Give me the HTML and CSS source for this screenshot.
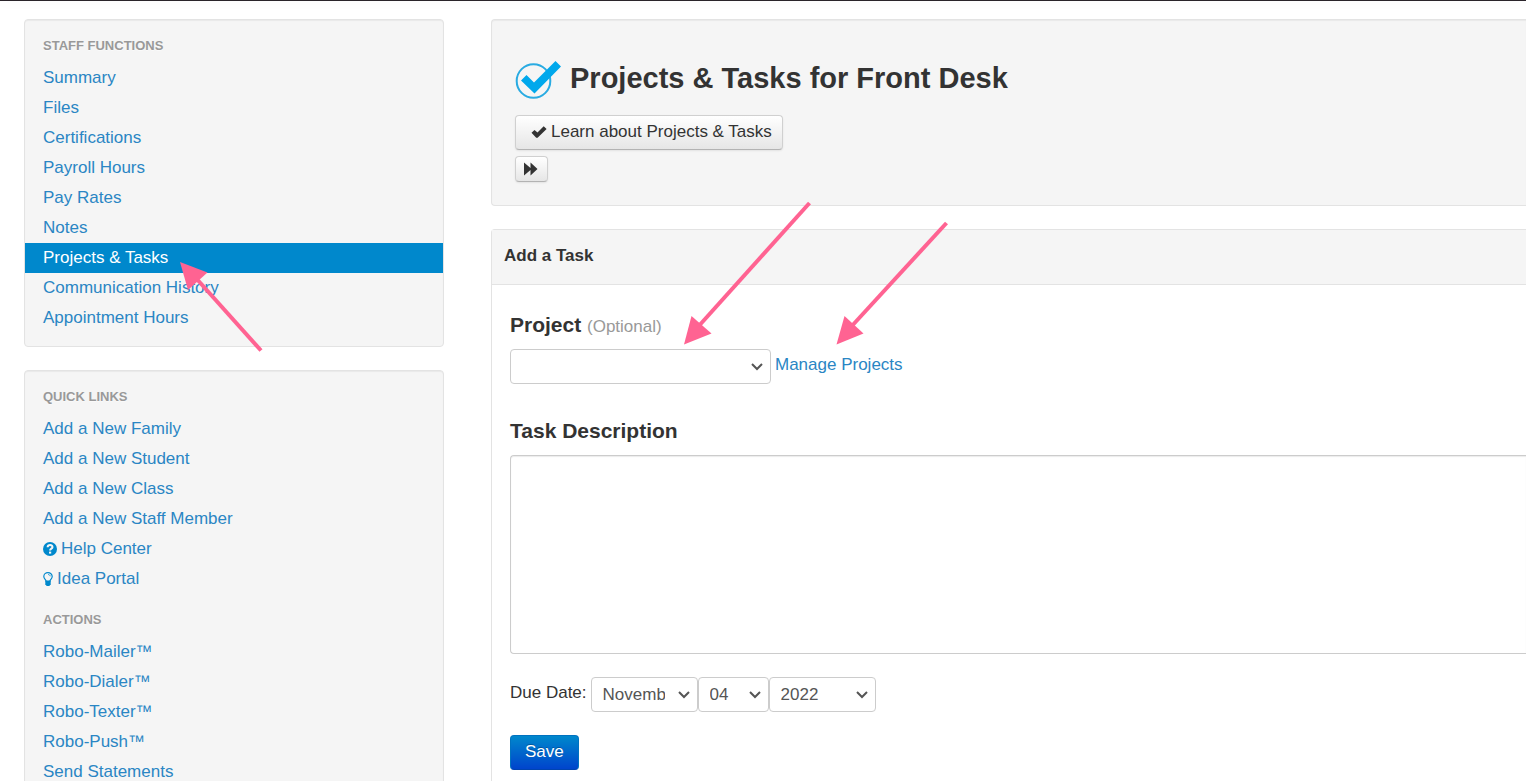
FILE: index.html
```html
<!DOCTYPE html>
<html lang="en">
<head>
<meta charset="utf-8">
<title>Projects &amp; Tasks for Front Desk</title>
<link rel="stylesheet" href="styles.css">
</head>
<body>
<div class="topbar"></div>
<div class="layout">
  <aside class="sidebar">
    <nav class="well side-panel" aria-label="Staff functions">
      <h2 class="nav-header">Staff Functions</h2>
      <ul class="nav-list">
        <li><a href="#">Summary</a></li>
        <li><a href="#">Files</a></li>
        <li><a href="#">Certifications</a></li>
        <li><a href="#">Payroll Hours</a></li>
        <li><a href="#">Pay Rates</a></li>
        <li><a href="#">Notes</a></li>
        <li><a class="active" href="#">Projects &amp; Tasks</a></li>
        <li><a href="#">Communication History</a></li>
        <li><a href="#">Appointment Hours</a></li>
      </ul>
    </nav>
    <nav class="well side-panel side-panel-last" aria-label="Quick links">
      <h2 class="nav-header">Quick Links</h2>
      <ul class="nav-list">
        <li><a href="#">Add a New Family</a></li>
        <li><a href="#">Add a New Student</a></li>
        <li><a href="#">Add a New Class</a></li>
        <li><a href="#">Add a New Staff Member</a></li>
        <li><a class="with-icon" href="#"><svg width="14" height="14" viewBox="0 0 14 14" aria-hidden="true"><circle cx="7" cy="7" r="7" fill="#08c"/><path d="M4.600 5.200C4.800 2.400 9.600 2.400 9.500 5.100C9.400 6.700 7.100 6.600 7.100 8.600" fill="none" stroke="#f5f5f5" stroke-width="2"/><rect x="6" y="9.600" width="2.200" height="2" fill="#f5f5f5"/></svg>Help Center</a></li>
        <li><a class="with-icon" href="#"><svg width="10" height="14" viewBox="0 0 10 14" aria-hidden="true"><path d="M3.200 9.500C3.200 7.600 .8 7 .8 4.500C.8 2.300 2.700 .7 5 .7S9.200 2.300 9.200 4.500C9.200 7 6.800 7.600 6.800 9.500Z" fill="none" stroke="#08c" stroke-width="1.200"/><path d="M5 2.500C6.300 2.500 7.200 3.300 7.300 4.300" fill="none" stroke="#08c" stroke-width=".8"/><path d="M2.300 8.600H7.700V12.300L6.300 14H3.700L2.300 12.300Z" fill="#08c"/></svg>Idea Portal</a></li>
      </ul>
      <h2 class="nav-header nav-header-next">Actions</h2>
      <ul class="nav-list">
        <li><a href="#">Robo-Mailer™</a></li>
        <li><a href="#">Robo-Dialer™</a></li>
        <li><a href="#">Robo-Texter™</a></li>
        <li><a href="#">Robo-Push™</a></li>
        <li><a href="#">Send Statements</a></li>
      </ul>
    </nav>
  </aside>
  <main class="content">
    <header class="well page-header">
      <div class="title-row">
        <svg width="46" height="40" viewBox="0 0 46 40" aria-hidden="true"><circle cx="18.500" cy="21" r="16.800" fill="none" stroke="#29abe2" stroke-width="2"/><path d="M6 20.500L11.500 15L19 22.500L40.500 1L46 6.500L19.500 33.500Z" fill="#00a8ec"/></svg>
        <h1>Projects &amp; Tasks for Front Desk</h1>
      </div>
      <button class="btn" type="button"><svg width="16" height="12" viewBox="0 0 16 12" aria-hidden="true"><path d="M.5 6.800L3.500 4L6.500 6.500L12.700 .3L15.600 3L6.600 11.800H5.200Z" fill="#333"/></svg>Learn about Projects &amp; Tasks</button>
      <button class="btn btn-small" type="button" aria-label="Expand"><svg width="14" height="14" viewBox="0 0 14 14" aria-hidden="true"><path d="M0 .5L6.500 6V.5L13.500 7L6.500 13.500V8L0 13.500Z" fill="#333"/></svg></button>
    </header>
    <section class="box">
      <h2 class="box-header">Add a Task</h2>
      <form class="task-form">
        <label class="field-title" for="project">Project <small>(Optional)</small></label>
        <div class="inline-row">
          <span class="select project-select"><select id="project"><option></option></select><svg class="chevron" width="12" height="8" viewBox="0 0 12 8" aria-hidden="true"><path d="M1 1L6 6L11 1" fill="none" stroke="#555" stroke-width="2"/></svg></span>
          <a href="#">Manage Projects</a>
        </div>
        <label class="field-title description-title" for="description">Task Description</label>
        <textarea id="description"></textarea>
        <div class="inline-row due-row">
          <label for="month">Due Date:</label>
          <div class="date-group">
            <span class="select month-select"><select id="month"><option>November</option></select><svg class="chevron" width="12" height="8" viewBox="0 0 12 8" aria-hidden="true"><path d="M1 1L6 6L11 1" fill="none" stroke="#555" stroke-width="2"/></svg></span>
            <span class="select day-select"><select aria-label="Day"><option>04</option></select><svg class="chevron" width="12" height="8" viewBox="0 0 12 8" aria-hidden="true"><path d="M1 1L6 6L11 1" fill="none" stroke="#555" stroke-width="2"/></svg></span>
            <span class="select year-select"><select aria-label="Year"><option>2022</option></select><svg class="chevron" width="12" height="8" viewBox="0 0 12 8" aria-hidden="true"><path d="M1 1L6 6L11 1" fill="none" stroke="#555" stroke-width="2"/></svg></span>
          </div>
        </div>
        <button class="btn-primary" type="submit">Save</button>
      </form>
    </section>
  </main>
</div>
<svg class="annotations" aria-hidden="true">
  <g stroke="#ff6392" stroke-width="4" fill="none"><path d="M261 350.500L195 277"/><path d="M809.500 203L697 328"/><path d="M946.500 223L850 328"/></g>
  <g fill="#ff6392"><path d="M180 262L207.500 272.500L188 290Z"/><path d="M684 344.500L691.500 316L711.500 333.500Z"/><path d="M836.500 344.500L844.500 316L863.500 333.500Z"/></g>
</svg>
</body>
</html>
```
FILE: styles.css
```css
* { box-sizing: border-box; }

html, body { height: 100%; }

body {
  margin: 0;
  overflow: hidden;
  position: relative;
  background: #fff;
  color: #333;
  font: 17px/24px "Liberation Sans", Arial, sans-serif;
}

a { color: #2a86c4; text-decoration: none; }
h1, h2 { margin: 0; }
button, select, textarea { font: inherit; }

.topbar {
  height: 1px;
  background: #2a242a;
  box-shadow: 0 1px 12px rgba(0, 0, 0, .12);
}

.layout {
  display: flex;
  gap: 47px;
  min-height: 100%;
  padding: 18px 0 0 24px;
}

.sidebar { flex: 0 0 420px; }

.well {
  background: #f5f5f5;
  border: 1px solid #e3e3e3;
  border-radius: 4px;
  box-shadow: inset 0 1px 1px rgba(0, 0, 0, .05);
}

.side-panel { padding: 14px 0 13px; margin-bottom: 23px; }
.side-panel-last { margin-bottom: 0; padding-bottom: 24px; }

.nav-header {
  padding: 0 18px;
  color: #999;
  font-size: 13px;
  line-height: 24px;
  text-transform: uppercase;
  text-shadow: 0 1px 0 rgba(255, 255, 255, .5);
}

.nav-header-next { margin-top: 14px; }

.nav-list { margin: 5px 0 0; padding: 0; list-style: none; }

.nav-list a {
  display: block;
  padding: 0 18px;
  line-height: 30px;
}

.nav-list .with-icon { display: flex; align-items: center; gap: 4px; }
.nav-list .active { background: #08c; color: #fff; }

.content {
  flex: 1;
  min-width: 0;
  display: flex;
  flex-direction: column;
  gap: 23px;
}

.page-header {
  display: flex;
  flex-direction: column;
  align-items: flex-start;
  gap: 6px;
  padding: 40px 24px 23px 23px;
  border-right: 0;
  border-radius: 4px 0 0 4px;
}

.title-row {
  display: flex;
  align-items: flex-start;
  gap: 9px;
  min-height: 44px;
  margin-bottom: 5px;
}

h1 { font-size: 29px; line-height: 36px; }

.btn {
  display: flex;
  align-items: center;
  gap: 4px;
  padding: 4px 10px 5px 15px;
  border: 1px solid #d0d0d0;
  border-bottom-color: #b3b3b3;
  border-radius: 4px;
  background: linear-gradient(#fff, #e6e6e6);
  color: #333;
  box-shadow: 0 1px 2px rgba(0, 0, 0, .08);
}

.btn-small { padding: 5px 9px 5px 8px; }

.box {
  flex: 1;
  border: 1px solid #e3e3e3;
  border-width: 1px 0 0 1px;
  border-radius: 4px 0 0 0;
}

.box-header {
  padding: 14px 12px 16px;
  border-bottom: 1px solid #e3e3e3;
  background: #f5f5f5;
  font-size: 17px;
  line-height: 24px;
}

.task-form { padding: 28px 0 0 18px; }

.field-title {
  display: block;
  margin-bottom: 10px;
  font-size: 21px;
  font-weight: bold;
}

.field-title small { color: #999; font-size: 17px; font-weight: normal; }
.description-title { margin: 35px 0 12px; }

.inline-row { display: flex; gap: 4px; line-height: 32px; }

.select { display: grid; align-items: center; }
.select > * { grid-area: 1 / 1; }

select {
  width: 100%;
  height: 35px;
  padding: 0 32px 0 11px;
  border: 1px solid #ccc;
  border-radius: 4px;
  appearance: none;
  background: #fff;
  color: #555;
}

.chevron { justify-self: end; margin-right: 8px; pointer-events: none; }

.project-select { width: 261px; }
.month-select { width: 107px; }
.day-select { width: 71px; }
.year-select { width: 107px; }
.date-group { display: flex; }

textarea {
  display: block;
  width: 100%;
  height: 199px;
  border: 1px solid #ccc;
  border-right: 0;
  border-radius: 4px 0 0 4px;
  box-shadow: inset 0 1px 1px rgba(0, 0, 0, .08);
  resize: none;
}

.due-row { margin: 23px 0; }

.btn-primary {
  padding: 4px 14px 5px;
  border: 1px solid #0072c0;
  border-bottom-color: #0044b0;
  border-radius: 4px;
  background: linear-gradient(#08c, #04c);
  color: #fff;
  text-shadow: 0 -1px 0 rgba(0, 0, 0, .25);
}

.annotations {
  position: absolute;
  inset: 0;
  width: 100%;
  height: 100%;
  pointer-events: none;
}
```
